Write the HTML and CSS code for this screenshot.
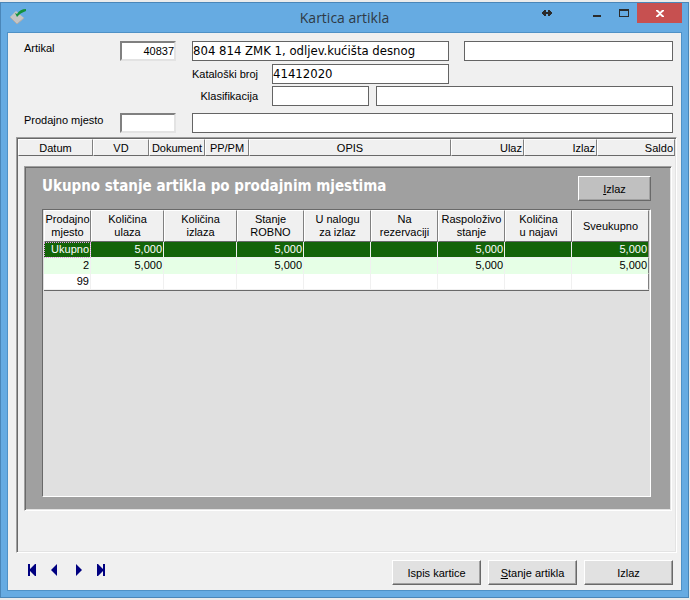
FILE: index.html
```html
<!DOCTYPE html>
<html lang="hr">
<head>
<meta charset="utf-8">
<title>Kartica artikla</title>
<link rel="stylesheet" href="styles.css">
</head>
<body>
<div class="window">
  <header class="titlebar">
    <svg class="app-icon" width="16" height="16" viewBox="0 0 16 16" aria-hidden="true">
      <path d="M0 8 L6 2 L14 9 L7 15 Z" fill="#c4c4c4"/>
      <path d="M0 8 L7 15 L14 9" fill="none" stroke="#b0aca8" stroke-width="1"/>
      <path d="M5 4 L7 8 Q10 4 16 2 V0 Q10 0 7 5 Z" fill="#12923f"/>
    </svg>
    <h1 class="title">Kartica artikla</h1>
    <div class="controls">
      <button class="control control-dock" type="button" aria-label="Premjesti">
        <svg width="10" height="8" viewBox="0 0 10 8"><path d="M0 3H1V2H2V1H4V3H6V1H8V2H9V3H10V5H9V6H8V7H6V5H4V7H2V6H1V5H0Z" fill="#2b2b2b"/></svg>
      </button>
      <button class="control" type="button" aria-label="Minimiziraj">
        <svg width="11" height="8" viewBox="0 0 11 8"><path d="M2 6H10V8H2Z" fill="#2b2b2b"/></svg>
      </button>
      <button class="control" type="button" aria-label="Maksimiziraj">
        <svg width="11" height="8" viewBox="0 0 11 8"><path fill-rule="evenodd" d="M1 0H11V8H1ZM2 2V7H10V2Z" fill="#2b2b2b"/></svg>
      </button>
      <button class="control control-close" type="button" aria-label="Zatvori">
        <svg width="8" height="7" viewBox="0 0 8 7"><path d="M0 0H2L4 2L6 0H8V1L5 3.5L8 6V7H6L4 5L2 7H0V6L3 3.5L0 1Z" fill="#fff"/></svg>
      </button>
    </div>
  </header>

  <main class="content">
    <form class="form">
      <div class="row">
        <label class="label" for="artikal">Artikal</label>
        <input class="field sunken code" id="artikal" value="40837">
        <input class="field name" aria-label="Naziv artikla" value="804 814 ZMK 1, odljev.kućišta desnog">
        <input class="field grow" aria-label="Dodatni naziv">
      </div>
      <div class="row row-catalog">
        <label class="label label-right" for="kataloski">Kataloški broj</label>
        <input class="field catalog" id="kataloski" value="41412020">
      </div>
      <div class="row row-class">
        <label class="label label-right" for="klasifikacija">Klasifikacija</label>
        <input class="field class-code" id="klasifikacija">
        <input class="field grow" aria-label="Naziv klasifikacije">
      </div>
      <div class="row row-place">
        <label class="label" for="mjesto">Prodajno mjesto</label>
        <input class="field sunken code" id="mjesto">
        <input class="field grow" aria-label="Naziv prodajnog mjesta">
      </div>
    </form>

    <section class="ledger">
      <table class="ledger-head">
        <colgroup><col class="w75"><col class="w56"><col class="w56"><col class="w44"><col><col class="w73"><col class="w73"><col class="w78"></colgroup>
        <thead>
          <tr><th>Datum</th><th>VD</th><th>Dokument</th><th>PP/PM</th><th>OPIS</th><th class="num">Ulaz</th><th class="num">Izlaz</th><th class="num">Saldo</th></tr>
        </thead>
      </table>

      <section class="panel">
        <div class="panel-head">
          <h2 class="panel-title">Ukupno stanje artikla po prodajnim mjestima</h2>
          <button class="button button-dark" type="button"><u>I</u>zlaz</button>
        </div>
        <div class="stock">
          <table class="stock-table">
            <colgroup><col class="w47"><col class="w73"><col class="w73"><col class="w67"><col class="w67"><col class="w67"><col class="w67"><col class="w67"><col></colgroup>
            <thead>
              <tr>
                <th>Prodajno<br>mjesto</th><th>Količina<br>ulaza</th><th>Količina<br>izlaza</th><th>Stanje<br>ROBNO</th><th>U nalogu<br>za izlaz</th><th>Na<br>rezervaciji</th><th>Raspoloživo<br>stanje</th><th>Količina<br>u najavi</th><th>Sveukupno</th>
              </tr>
            </thead>
            <tbody>
              <tr class="selected"><td class="focused">Ukupno</td><td>5,000</td><td></td><td>5,000</td><td></td><td></td><td>5,000</td><td></td><td>5,000</td></tr>
              <tr class="tinted"><td>2</td><td>5,000</td><td></td><td>5,000</td><td></td><td></td><td>5,000</td><td></td><td>5,000</td></tr>
              <tr><td>99</td><td></td><td></td><td></td><td></td><td></td><td></td><td></td><td></td></tr>
            </tbody>
          </table>
        </div>
      </section>
    </section>

    <footer class="footer">
      <nav class="pager" aria-label="Zapisi">
        <button class="page" type="button" aria-label="Prvi"><svg width="8" height="12" viewBox="0 0 8 12"><path d="M0 0H2V5L7 0H8V12H7L2 7V12H0Z" fill="#000080"/></svg></button>
        <button class="page" type="button" aria-label="Prethodni"><svg width="6" height="12" viewBox="0 0 6 12"><path d="M6 0V12L0 6Z" fill="#000080"/></svg></button>
        <button class="page" type="button" aria-label="Sljedeći"><svg width="6" height="12" viewBox="0 0 6 12"><path d="M0 0V12L6 6Z" fill="#000080"/></svg></button>
        <button class="page" type="button" aria-label="Zadnji"><svg width="8" height="12" viewBox="0 0 8 12"><path d="M8 0H6V5L1 0H0V12H1L6 7V12H8Z" fill="#000080"/></svg></button>
      </nav>
      <div class="actions">
        <button class="button" type="button">Ispis kartice</button>
        <button class="button" type="button"><u>S</u>tanje artikla</button>
        <button class="button" type="button">Izlaz</button>
      </div>
    </footer>
  </main>
</div>
</body>
</html>
```
FILE: styles.css
```css
* {
  box-sizing: border-box;
}

body {
  margin: 0;
  padding: 2px 1px 2px 0;
  height: 100vh;
  background: #ebebeb;
  color: #000;
  font: 11px/14px "Liberation Sans", Arial, sans-serif;
}

button,
input {
  font: inherit;
  color: inherit;
}

.window {
  display: flex;
  flex-direction: column;
  height: 100%;
  padding: 0 6px 6px;
  border: 1px solid #4a86b8;
  background: #66abe2;
}

/* Title bar */
.titlebar {
  display: grid;
  grid-template-columns: 1fr auto 1fr;
  height: 29px;
}

.app-icon {
  margin: 6px 0 0 3px;
}

.title {
  margin: 0;
  color: #2f3a45;
  font: 14px/29px "Open Sans", "Segoe UI", sans-serif;
}

.controls {
  display: flex;
  justify-content: flex-end;
  height: 20px;
}

.control {
  display: flex;
  align-items: center;
  justify-content: center;
  width: 27px;
  padding: 0;
  border: 0;
  background: none;
}

.control-dock {
  margin-right: 23px;
}

.control-close {
  width: 45px;
  background: #c75050;
}

/* Client area */
.content {
  display: flex;
  flex: 1;
  flex-direction: column;
  border: 1px solid #4f91c6;
  background: #f0f0f0;
}

.form {
  padding: 8px 8px 4px 16px;
}

.row {
  display: flex;
  height: 20px;
}

.row-catalog {
  margin-top: 3px;
}

.row-class {
  margin-top: 2px;
}

.row-place {
  margin-top: 7px;
}

.label {
  width: 96px;
}

.label-right {
  width: 234px;
  margin-right: 14px;
  line-height: 21px;
  text-align: right;
}

.field {
  min-width: 0;
  padding: 0;
  border: 1px solid #646464;
  border-radius: 0;
  background: #fff;
  font: 13px/18px "DejaVu Sans Condensed", Tahoma, sans-serif;
}

.sunken {
  border: 2px solid;
  border-color: #808080 #e3e3e3 #e3e3e3 #808080;
  font: 11px/16px "Liberation Sans", Arial, sans-serif;
  text-align: right;
}

.code {
  width: 56px;
  margin-right: 16px;
}

.name {
  width: 257px;
  margin-right: 15px;
}

.catalog {
  width: 177px;
}

.class-code {
  width: 97px;
  margin-right: 7px;
}

.grow {
  flex: 1;
}

/* Column widths shared by both tables */
.w44 { width: 44px; }
.w47 { width: 47px; }
.w56 { width: 56px; }
.w67 { width: 67px; }
.w73 { width: 73px; }
.w75 { width: 75px; }
.w78 { width: 78px; }

table {
  width: 100%;
  border-collapse: separate;
  border-spacing: 0;
  table-layout: fixed;
}

th {
  padding: 0;
  border-top: 1px solid #fff;
  border-left: 1px solid #fff;
  border-right: 1px solid #808080;
  border-bottom: 1px solid #696969;
  background: #f0f0f0;
  font-weight: normal;
  white-space: nowrap;
}

/* Ledger frame */
.ledger {
  display: flex;
  flex: 1;
  flex-direction: column;
  margin: 0 4px 0 8px;
  border: 1px solid;
  border-color: #a0a0a0 #fff #fff #a0a0a0;
  box-shadow: inset 1px 1px #696969, inset -1px -1px #e3e3e3;
  padding: 1px;
}

.ledger-head th {
  height: 17px;
}

.ledger-head .num {
  padding-right: 1px;
  text-align: right;
}

.panel {
  display: flex;
  flex: 1;
  flex-direction: column;
  margin: 10px 3px 40px 6px;
  padding: 9px 20px 13px 17px;
  border: 1px solid;
  border-color: #a0a0a0 #fff #fff #a0a0a0;
  box-shadow: inset 1px 1px #696969, inset -1px -1px #e3e3e3;
  background: #a0a0a0;
}

.panel-head {
  display: flex;
  justify-content: space-between;
  margin-bottom: 8px;
}

.panel-title {
  margin: 0;
  color: #fff;
  font: bold 15px/20px "DejaVu Sans Condensed", Tahoma, sans-serif;
}

.stock {
  flex: 1;
  padding: 0 1px;
  border: 1px solid;
  border-color: #696969 #fff #fff #696969;
  background: #e0e0e0;
}

.stock-table {
  border-bottom: 1px solid #696969;
}

.stock-table th {
  height: 32px;
  line-height: 13px;
}

.stock-table td {
  height: 16px;
  padding: 0 1px 0 0;
  border-right: 1px solid #f0f0f0;
  border-bottom: 1px solid #f0f0f0;
  background: #fff;
  line-height: 15px;
  text-align: right;
}

.stock-table .tinted td {
  border-bottom-color: #e6ffe6;
  background: #e6ffe6;
}

.stock-table .selected td {
  background: #146409;
  color: #fff;
}

.stock-table td:last-child {
  border-right-color: #808080;
}

.stock-table .focused {
  outline: 1px dotted #e69be6;
  outline-offset: -1px;
}

/* Footer */
.footer {
  display: flex;
  justify-content: space-between;
  padding: 7px 8px 5px 20px;
}

.pager {
  display: flex;
  padding-top: 4px;
  gap: 15px;
}

.page {
  display: flex;
  height: 12px;
  padding: 0;
  border: 0;
  background: none;
}

.page:nth-child(3) {
  margin-left: 4px;
}

.actions {
  display: flex;
  gap: 7px;
}

.button {
  width: 89px;
  height: 25px;
  padding: 0;
  border: 1px solid;
  border-color: #fff #696969 #696969 #fff;
  border-radius: 0;
  box-shadow: inset -1px -1px #a0a0a0;
  background: #e1e1e1;
}

.button-dark {
  width: 73px;
  background: #c0c0c0;
}
```
